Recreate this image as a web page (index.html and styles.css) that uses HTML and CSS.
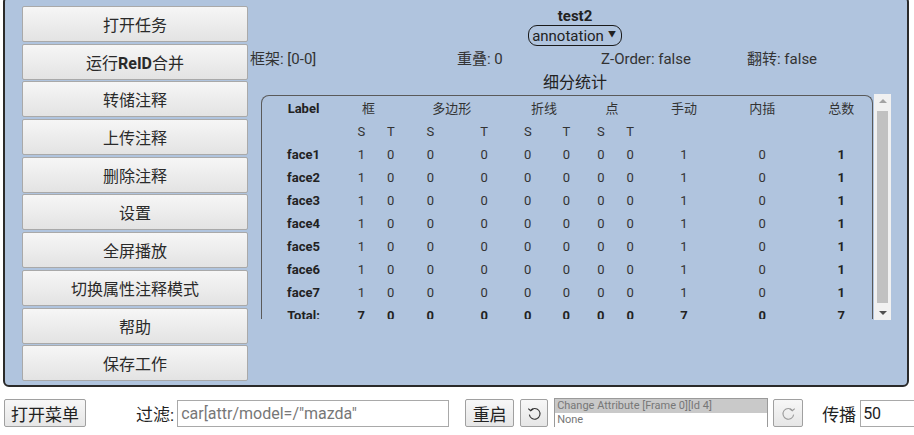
FILE: index.html
```html
<!DOCTYPE html>
<html>
<head>
<meta charset="utf-8">
<link rel="stylesheet" href="styles.css">
</head>
<body>
<div class="panel">
  <div class="menu">
    <button class="mbtn">打开任务</button>
    <button class="mbtn">运行<b>ReID</b>合并</button>
    <button class="mbtn">转储注释</button>
    <button class="mbtn">上传注释</button>
    <button class="mbtn">删除注释</button>
    <button class="mbtn">设置</button>
    <button class="mbtn">全屏播放</button>
    <button class="mbtn">切换属性注释模式</button>
    <button class="mbtn">帮助</button>
    <button class="mbtn">保存工作</button>
  </div>
  <div class="info">
    <div class="title">test2</div>
    <div class="selrow"><span class="sel">annotation <span class="arrow">▼</span></span></div>
    <div class="meta">
      <span>框架: [0-0]</span>
      <span>重叠: 0</span>
      <span>Z-Order: false</span>
      <span>翻转: false</span>
    </div>
    <div class="subtitle">细分统计</div>
    <div class="statwrap">
      <div class="statbox">
        <table class="stats">
          <colgroup>
            <col class="c1"><col class="c2"><col class="c3"><col class="c4"><col class="c5"><col class="c6"><col class="c7"><col class="c8"><col class="c9"><col class="c10"><col class="c11"><col class="c12">
          </colgroup>
          <tr class="head">
            <th>Label</th><th colspan="2">框</th><th colspan="2">多边形</th><th colspan="2">折线</th><th colspan="2">点</th><th>手动</th><th>内插</th><th>总数</th>
          </tr>
          <tr class="st">
            <td></td><td>S</td><td>T</td><td>S</td><td>T</td><td>S</td><td>T</td><td>S</td><td>T</td><td></td><td></td><td></td>
          </tr>
          <tr><th>face1</th><td>1</td><td>0</td><td>0</td><td>0</td><td>0</td><td>0</td><td>0</td><td>0</td><td>1</td><td>0</td><td class="tot">1</td></tr>
          <tr><th>face2</th><td>1</td><td>0</td><td>0</td><td>0</td><td>0</td><td>0</td><td>0</td><td>0</td><td>1</td><td>0</td><td class="tot">1</td></tr>
          <tr><th>face3</th><td>1</td><td>0</td><td>0</td><td>0</td><td>0</td><td>0</td><td>0</td><td>0</td><td>1</td><td>0</td><td class="tot">1</td></tr>
          <tr><th>face4</th><td>1</td><td>0</td><td>0</td><td>0</td><td>0</td><td>0</td><td>0</td><td>0</td><td>1</td><td>0</td><td class="tot">1</td></tr>
          <tr><th>face5</th><td>1</td><td>0</td><td>0</td><td>0</td><td>0</td><td>0</td><td>0</td><td>0</td><td>1</td><td>0</td><td class="tot">1</td></tr>
          <tr><th>face6</th><td>1</td><td>0</td><td>0</td><td>0</td><td>0</td><td>0</td><td>0</td><td>0</td><td>1</td><td>0</td><td class="tot">1</td></tr>
          <tr><th>face7</th><td>1</td><td>0</td><td>0</td><td>0</td><td>0</td><td>0</td><td>0</td><td>0</td><td>1</td><td>0</td><td class="tot">1</td></tr>
          <tr class="total"><th>Total:</th><td>7</td><td>0</td><td>0</td><td>0</td><td>0</td><td>0</td><td>0</td><td>0</td><td>7</td><td>0</td><td>7</td></tr>
        </table>
      </div>
      <div class="scrollbar">
        <div class="sarrow up"></div>
        <div class="thumb"></div>
        <div class="sarrow down"></div>
      </div>
    </div>
  </div>
</div>
<div class="bottom">
  <button class="bbtn menu-btn">打开菜单</button>
  <span class="lbl filter-lbl">过滤:</span>
  <input class="filter" type="text" value='car[attr/model=/"mazda"'>
  <button class="bbtn reset">重启</button>
  <button class="bbtn ibtn undo">
    <svg width="15" height="15" viewBox="0 0 14 14"><path d="M3.2 4.2 A5 5 0 1 1 2.2 8" fill="none" stroke="#333" stroke-width="1"/><path d="M1.2 2.4 L3.4 4.4 L5.8 2.8" fill="none" stroke="#333" stroke-width="1"/></svg>
  </button>
  <div class="history">
    <div class="hist-top">Change Attribute [Frame 0][Id 4]</div>
    <div class="hist-bot">None</div>
  </div>
  <button class="bbtn ibtn redo">
    <svg width="15" height="15" viewBox="0 0 14 14"><path d="M10.8 4.2 A5 5 0 1 0 11.8 8" fill="none" stroke="#9a9a9a" stroke-width="1"/><path d="M12.8 2.4 L10.6 4.4 L8.2 2.8" fill="none" stroke="#9a9a9a" stroke-width="1"/></svg>
  </button>
  <span class="lbl prop-lbl">传播</span>
  <input class="prop" type="text" value="50">
</div>
</body>
</html>
```

FILE: styles.css
```css
html, body {
  margin: 0;
  padding: 0;
  background: #ffffff;
  font-family: Roboto, "Noto Sans CJK SC", sans-serif;
  color: #222;
  overflow: hidden;
}

.panel {
  display: flex;
  margin: -4px 0 0 3px;
  width: 906px;
  height: 391px;
  box-sizing: border-box;
  background: #b0c4de;
  border: 2px solid #2a2a2a;
  border-radius: 6px;
  padding: 8px 0 0 17px;
}

.menu {
  display: flex;
  flex-direction: column;
  gap: 1.7px;
  width: 226px;
  flex: none;
}

.mbtn {
  height: 36px;
  width: 226px;
  margin: 0;
  box-sizing: border-box;
  border: 1px solid #a9a9a9;
  border-radius: 2px;
  background: linear-gradient(#f6f6f6, #e3e3e3);
  font-family: Roboto, "Noto Sans CJK SC", sans-serif;
  font-size: 16px;
  color: #2a2a2a;
  padding: 0;
}

.mbtn b {
  font-weight: 700;
}

.info {
  flex: 1;
  display: flex;
  flex-direction: column;
  padding-left: 1px;
}

.title {
  text-align: center;
  font-weight: 700;
  font-size: 15px;
  line-height: 17px;
  margin-top: 2px;
  padding-right: 6px;
}

.selrow {
  display: flex;
  justify-content: center;
  padding-right: 6px;
}

.sel {
  display: inline-flex;
  align-items: center;
  height: 21px;
  box-sizing: border-box;
  border: 1px solid #1a1a1a;
  border-radius: 9px;
  padding: 0 5px 0 3px;
  font-size: 15px;
  color: #222;
}

.arrow {
  font-size: 8px;
  margin-left: 4px;
  position: relative;
  top: -2px;
}

.meta {
  display: grid;
  grid-template-columns: 207px 144px 146px 1fr;
  font-size: 15px;
  color: #333;
  height: 24px;
  line-height: 24px;
  margin-top: 1px;
  padding-left: 1px;
}

.subtitle {
  text-align: center;
  font-size: 16px;
  line-height: 22px;
  margin-top: 1px;
  padding-right: 6px;
  color: #222;
}

.statwrap {
  display: flex;
  margin-left: 12px;
  margin-top: 1px;
}

.statbox {
  width: 612px;
  height: 224px;
  box-sizing: border-box;
  border: 1px solid #5a5a5a;
  border-bottom: none;
  border-radius: 8px 8px 0 0;
  overflow: hidden;
  padding-top: 1px;
}

.stats {
  border-collapse: collapse;
  table-layout: fixed;
  width: 617px;
  margin-left: 6px;
  font-size: 13px;
  color: #333;
}

.c1 { width: 70px; }
.c2 { width: 44px; }
.c3 { width: 14px; }
.c4 { width: 64px; }
.c5 { width: 42px; }
.c6 { width: 44px; }
.c7 { width: 32px; }
.c8 { width: 36px; }
.c9 { width: 22px; }
.c10 { width: 84px; }
.c11 { width: 70px; }
.c12 { width: 86px; }

.stats th, .stats td {
  height: 23px;
  padding: 0;
  text-align: center;
  white-space: nowrap;
  line-height: 23px;
}

.stats th {
  font-weight: 700;
  color: #222;
}

.stats tr.head th {
  font-weight: 400;
  color: #333;
}

.stats tr.head th:first-child {
  font-weight: 700;
  color: #222;
}

.stats td.tot, .stats tr.total td {
  font-weight: 700;
  color: #222;
}

.scrollbar {
  width: 17px;
  height: 226px;
  margin-left: 1px;
  margin-top: -1px;
  background: #f1f1f1;
  display: flex;
  flex-direction: column;
  align-items: center;
}

.thumb {
  width: 11px;
  flex: 1;
  background: #c1c1c1;
  margin: 3px 0;
}

.sarrow {
  width: 0;
  height: 0;
  border-left: 4px solid transparent;
  border-right: 4px solid transparent;
  margin: 5px 0;
}

.sarrow.up {
  border-bottom: 4px solid #a3a3a3;
}

.sarrow.down {
  border-top: 4px solid #505050;
}

.bottom {
  display: flex;
  align-items: center;
  height: 28px;
  margin-top: 12px;
  padding-left: 4px;
  white-space: nowrap;
}

.bottom > * {
  flex: none;
}

.bbtn {
  height: 28px;
  box-sizing: border-box;
  border: 1px solid #a0a0a0;
  border-radius: 2px;
  background: linear-gradient(#f7f7f7, #e6e6e6);
  font-family: Roboto, "Noto Sans CJK SC", sans-serif;
  font-size: 17px;
  color: #222;
  padding: 0 4px;
  margin: 0;
  display: inline-flex;
  align-items: center;
  justify-content: center;
}

.menu-btn {
  width: 82px;
}

.lbl {
  font-size: 17px;
  color: #222;
}

.filter-lbl {
  margin-left: 50px;
}

.filter {
  margin-left: 3px;
  width: 272px;
  height: 27px;
  box-sizing: border-box;
  border: 1px solid #a9a9a9;
  padding: 0 3px;
  font-family: Roboto, sans-serif;
  font-size: 16px;
  color: #777;
}

.reset {
  margin-left: 16px;
  width: 49px;
}

.ibtn {
  width: 28px;
  padding: 0;
}

.undo {
  margin-left: 6px;
}

.history {
  margin-left: 6px;
  width: 214px;
  height: 30px;
  box-sizing: border-box;
  border: 1px solid #9a9a9a;
  font-size: 11px;
  color: #777;
  display: flex;
  flex-direction: column;
}

.hist-top {
  background: #c9c9c9;
  height: 14px;
  line-height: 14px;
  padding-left: 2px;
}

.hist-bot {
  background: #fff;
  flex: 1;
  line-height: 14px;
  padding-left: 2px;
}

.redo {
  margin-left: 5px;
  width: 30px;
}

.prop-lbl {
  margin-left: 19px;
}

.prop {
  margin-left: 4px;
  width: 60px;
  height: 27px;
  box-sizing: border-box;
  border: 1px solid #a9a9a9;
  padding: 0 2px;
  font-family: Roboto, sans-serif;
  font-size: 16px;
  color: #222;
}
```
